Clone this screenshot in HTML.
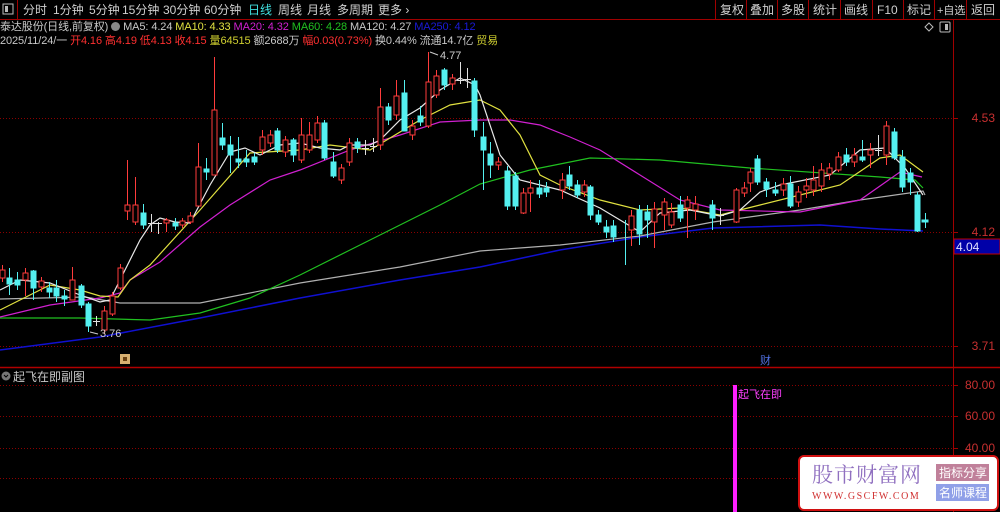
<!DOCTYPE html><html><head><meta charset="utf-8"><style>
body{margin:0;background:#000;width:1000px;height:512px;overflow:hidden;position:relative;font-family:"Liberation Sans","Noto Sans CJK SC",sans-serif;}
.t{position:absolute;white-space:nowrap;font-size:11px;letter-spacing:-0.1px}
</style></head><body>
<svg width="1000" height="512" style="position:absolute;left:0;top:0" font-family="Liberation Sans, Noto Sans CJK SC, sans-serif">
<rect width="1000" height="512" fill="#000"/>
<line x1="0" y1="19.5" x2="1000" y2="19.5" stroke="#a00000"/>
<rect x="3" y="4" width="10" height="10" fill="none" stroke="#bbb"/><rect x="5" y="6" width="3" height="6" fill="#bbb"/>
<line x1="17.5" y1="0" x2="17.5" y2="19" stroke="#a00000"/>
<g fill="#d0d0d0" font-size="12">
<text x="23" y="14">分时</text><text x="53" y="14">1分钟</text><text x="89" y="14">5分钟</text><text x="122" y="14">15分钟</text><text x="163" y="14">30分钟</text><text x="204" y="14">60分钟</text>
<text x="248" y="14" fill="#40e0e0">日线</text><text x="278" y="14">周线</text><text x="307" y="14">月线</text><text x="337" y="14">多周期</text><text x="378" y="14">更多 ›</text>
<text x="720" y="14">复权</text><text x="750" y="14">叠加</text><text x="781" y="14">多股</text><text x="813" y="14">统计</text><text x="844" y="14">画线</text><text x="877" y="14">F10</text><text x="907" y="14">标记</text><text x="937" y="14" font-size="11">+自选</text><text x="971" y="14">返回</text>
</g>
<g stroke="#a00000"><line x1="715.5" y1="0" x2="715.5" y2="19"/><line x1="746.5" y1="0" x2="746.5" y2="19"/><line x1="777.5" y1="0" x2="777.5" y2="19"/><line x1="808.5" y1="0" x2="808.5" y2="19"/><line x1="840.5" y1="0" x2="840.5" y2="19"/><line x1="872.5" y1="0" x2="872.5" y2="19"/><line x1="903.5" y1="0" x2="903.5" y2="19"/><line x1="934.5" y1="0" x2="934.5" y2="19"/><line x1="966.5" y1="0" x2="966.5" y2="19"/></g>
<line x1="953.5" y1="20" x2="953.5" y2="512" stroke="#a00000"/>
<path d="M925 27l4-4 4 4-4 4z" fill="none" stroke="#bbb"/><rect x="940" y="22" width="10" height="10" rx="1" fill="none" stroke="#bbb"/><rect x="945" y="24" width="3" height="6" fill="#bbb"/>
<g stroke="#8a0000" stroke-dasharray="1,2"><line x1="0" y1="118.5" x2="953" y2="118.5"/><line x1="0" y1="232.5" x2="953" y2="232.5"/><line x1="0" y1="346.5" x2="953" y2="346.5"/>
<line x1="0" y1="385.5" x2="953" y2="385.5"/><line x1="0" y1="416.5" x2="953" y2="416.5"/><line x1="0" y1="448.5" x2="953" y2="448.5"/><line x1="0" y1="478.5" x2="953" y2="478.5"/></g>
<g stroke="#a00000"><line x1="953" y1="118.5" x2="958" y2="118.5"/><line x1="953" y1="232.5" x2="958" y2="232.5"/><line x1="953" y1="346.5" x2="958" y2="346.5"/><line x1="953" y1="385.5" x2="958" y2="385.5"/><line x1="953" y1="416.5" x2="958" y2="416.5"/><line x1="953" y1="448.5" x2="958" y2="448.5"/></g>
<g fill="#c83030" font-size="12" text-anchor="end"><text x="995" y="122">4.53</text><text x="995" y="236">4.12</text><text x="995" y="350">3.71</text><text x="995" y="389">80.00</text><text x="995" y="420">60.00</text><text x="995" y="452">40.00</text></g>
<rect x="954" y="239" width="46" height="15" fill="#0000a8" stroke="#c00000"/>
<text x="956" y="251" fill="#e0e0ff" font-size="12">4.04</text>
<line x1="0" y1="367.5" x2="1000" y2="367.5" stroke="#b00000" stroke-width="1.5"/>
<g fill="none" stroke-width="1.2">
<polyline stroke="#1010d0" stroke-width="1.5" points="0,350 100,337 200,318 300,298 400,280 480,267 560,250 640,237 713,228 820,225 880,229 923,231"/>
<polyline stroke="#b0b0b0" points="0,299 85,297 120,303 200,303 300,283 400,267 480,251 560,245 640,236 713,222 800,210 860,200 923,191 925,195"/>
<polyline stroke="#20c020" points="0,318 80,318 150,320 200,313 250,298 300,275 350,250 400,225 440,205 480,184 530,170 590,158 660,160 750,168 880,177 915,180 923,188"/>
<polyline stroke="#d020d0" points="0,317 50,305 100,298 120,293 130,280 160,262 200,227 230,205 270,180 300,170 350,150 400,135 440,122 480,120 510,120 540,125 570,137 600,150 640,175 680,200 720,210 800,212 860,200 900,172 922,177"/>
<polyline stroke="#e0e040" points="0,310 50,285 80,290 100,296 118,297 130,280 150,265 200,210 250,153 300,150 330,145 370,150 420,120 450,105 480,100 500,110 520,135 540,175 560,185 600,200 640,210 680,208 720,215 760,205 800,195 840,185 880,158 900,155 923,172"/>
<polyline stroke="#e8e8e8" points="0,290 20,280 50,283 80,295 100,302 110,300 125,270 140,240 150,225 160,218 175,222 190,223 210,185 230,152 245,148 260,155 280,145 300,143 320,148 340,150 350,145 370,145 380,140 400,120 420,108 440,90 460,78 475,85 480,95 500,155 520,180 560,190 600,208 640,232 660,213 690,210 720,216 740,210 760,192 780,185 830,175 860,150 885,148 905,168 923,195"/>
</g>
<g stroke="#ff3c3c" fill="#000" stroke-width="1">
<line x1="2.5" y1="265" x2="2.5" y2="282"/><rect x="0" y="270" width="5" height="8"/>
<line x1="25.5" y1="268" x2="25.5" y2="296"/><rect x="23" y="273" width="5" height="7"/>
<line x1="41.5" y1="277" x2="41.5" y2="292"/><rect x="39" y="281" width="5" height="6"/>
<line x1="72.5" y1="267" x2="72.5" y2="300"/><rect x="70" y="280" width="5" height="20"/>
<line x1="104.5" y1="306" x2="104.5" y2="334"/><rect x="102" y="311" width="5" height="19"/>
<line x1="112.5" y1="292" x2="112.5" y2="316"/><rect x="110" y="296" width="5" height="18"/>
<line x1="120.5" y1="264" x2="120.5" y2="290"/><rect x="118" y="268" width="5" height="20"/>
<line x1="127.5" y1="160" x2="127.5" y2="220"/><rect x="125" y="205" width="5" height="6"/>
<line x1="135.5" y1="177" x2="135.5" y2="225"/><rect x="133" y="205" width="5" height="17"/>
<line x1="166.5" y1="218" x2="166.5" y2="232"/><rect x="164" y="220" width="5" height="3"/>
<line x1="182.5" y1="218" x2="182.5" y2="228"/><rect x="180" y="221" width="5" height="4"/>
<line x1="190.5" y1="212" x2="190.5" y2="224"/><rect x="188" y="216" width="5" height="6"/>
<line x1="198.5" y1="143" x2="198.5" y2="206"/><rect x="196" y="167" width="5" height="39"/>
<line x1="214.5" y1="57" x2="214.5" y2="175"/><rect x="212" y="110" width="5" height="65"/>
<line x1="262.5" y1="130" x2="262.5" y2="155"/><rect x="260" y="137" width="5" height="13"/>
<line x1="270.5" y1="130" x2="270.5" y2="147"/><rect x="268" y="135" width="5" height="8"/>
<line x1="285.5" y1="136" x2="285.5" y2="157"/><rect x="283" y="140" width="5" height="12"/>
<line x1="301.5" y1="118" x2="301.5" y2="163"/><rect x="299" y="135" width="5" height="25"/>
<line x1="309.5" y1="122" x2="309.5" y2="153"/><rect x="307" y="135" width="5" height="15"/>
<line x1="317.5" y1="116" x2="317.5" y2="143"/><rect x="315" y="123" width="5" height="17"/>
<line x1="341.5" y1="164" x2="341.5" y2="184"/><rect x="339" y="168" width="5" height="12"/>
<line x1="349.5" y1="138" x2="349.5" y2="166"/><rect x="347" y="143" width="5" height="19"/>
<line x1="380.5" y1="88" x2="380.5" y2="150"/><rect x="378" y="107" width="5" height="38"/>
<line x1="396.5" y1="80" x2="396.5" y2="120"/><rect x="394" y="96" width="5" height="19"/>
<line x1="412.5" y1="120" x2="412.5" y2="140"/><rect x="410" y="126" width="5" height="9"/>
<line x1="428.5" y1="52" x2="428.5" y2="128"/><rect x="426" y="82" width="5" height="44"/>
<line x1="436.5" y1="70" x2="436.5" y2="98"/><rect x="434" y="76" width="5" height="19"/>
<line x1="452.5" y1="74" x2="452.5" y2="90"/><rect x="450" y="78" width="5" height="6"/>
<line x1="498.5" y1="157" x2="498.5" y2="170"/><rect x="496" y="162" width="5" height="3"/>
<line x1="523.5" y1="188" x2="523.5" y2="214"/><rect x="521" y="193" width="5" height="20"/>
<line x1="530.5" y1="180" x2="530.5" y2="212"/><rect x="528" y="188" width="5" height="5"/>
<line x1="562.5" y1="173" x2="562.5" y2="199"/><rect x="560" y="180" width="5" height="10"/>
<line x1="584.5" y1="180" x2="584.5" y2="197"/><rect x="582" y="185" width="5" height="7"/>
<line x1="631.5" y1="210" x2="631.5" y2="246"/><rect x="629" y="216" width="5" height="14"/>
<line x1="654.5" y1="202" x2="654.5" y2="248"/><rect x="652" y="209" width="5" height="13"/>
<line x1="664.5" y1="198" x2="664.5" y2="230"/><rect x="662" y="202" width="5" height="13"/>
<line x1="671.5" y1="203" x2="671.5" y2="228"/><rect x="669" y="212" width="5" height="13"/>
<line x1="687.5" y1="196" x2="687.5" y2="238"/><rect x="685" y="200" width="5" height="8"/>
<line x1="695.5" y1="196" x2="695.5" y2="220"/><rect x="693" y="204" width="5" height="6"/>
<line x1="736.5" y1="188" x2="736.5" y2="223"/><rect x="734" y="190" width="5" height="32"/>
<line x1="744.5" y1="182" x2="744.5" y2="197"/><rect x="742" y="188" width="5" height="5"/>
<line x1="750.5" y1="168" x2="750.5" y2="192"/><rect x="748" y="172" width="5" height="11"/>
<line x1="783.5" y1="178" x2="783.5" y2="196"/><rect x="781" y="184" width="5" height="6"/>
<line x1="798.5" y1="186" x2="798.5" y2="207"/><rect x="796" y="192" width="5" height="10"/>
<line x1="806.5" y1="178" x2="806.5" y2="198"/><rect x="804" y="186" width="5" height="4"/>
<line x1="813.5" y1="166" x2="813.5" y2="196"/><rect x="811" y="180" width="5" height="10"/>
<line x1="821.5" y1="163" x2="821.5" y2="192"/><rect x="819" y="170" width="5" height="16"/>
<line x1="829.5" y1="163" x2="829.5" y2="180"/><rect x="827" y="168" width="5" height="6"/>
<line x1="838.5" y1="152" x2="838.5" y2="172"/><rect x="836" y="157" width="5" height="13"/>
<line x1="854.5" y1="148" x2="854.5" y2="167"/><rect x="852" y="155" width="5" height="7"/>
<line x1="870.5" y1="143" x2="870.5" y2="168"/><rect x="868" y="150" width="5" height="5"/>
<line x1="886.5" y1="121" x2="886.5" y2="165"/><rect x="884" y="126" width="5" height="29"/>
</g>
<g stroke="#54f0f0" fill="#54f0f0">
<line x1="9.5" y1="268" x2="9.5" y2="295"/><rect x="7" y="278" width="5" height="6"/>
<line x1="17.5" y1="272" x2="17.5" y2="290"/><rect x="15" y="280" width="5" height="5"/>
<line x1="33.5" y1="270" x2="33.5" y2="300"/><rect x="31" y="271" width="5" height="17"/>
<line x1="49.5" y1="282" x2="49.5" y2="298"/><rect x="47" y="288" width="5" height="4"/>
<line x1="56.5" y1="280" x2="56.5" y2="302"/><rect x="54" y="288" width="5" height="8"/>
<line x1="64.5" y1="290" x2="64.5" y2="306"/><rect x="62" y="296" width="5" height="3"/>
<line x1="81.5" y1="284" x2="81.5" y2="308"/><rect x="79" y="286" width="5" height="19"/>
<line x1="88.5" y1="302" x2="88.5" y2="332"/><rect x="86" y="304" width="5" height="22"/>
<line x1="143.5" y1="204" x2="143.5" y2="229"/><rect x="141" y="213" width="5" height="12"/>
<line x1="175.5" y1="218" x2="175.5" y2="230"/><rect x="173" y="223" width="5" height="3"/>
<line x1="206.5" y1="158" x2="206.5" y2="180"/><rect x="204" y="169" width="5" height="3"/>
<line x1="222.5" y1="123" x2="222.5" y2="150"/><rect x="220" y="138" width="5" height="7"/>
<line x1="230.5" y1="136" x2="230.5" y2="173"/><rect x="228" y="145" width="5" height="10"/>
<line x1="238.5" y1="137" x2="238.5" y2="168"/><rect x="236" y="159" width="5" height="3"/>
<line x1="246.5" y1="150" x2="246.5" y2="167"/><rect x="244" y="159" width="5" height="3"/>
<line x1="254.5" y1="153" x2="254.5" y2="165"/><rect x="252" y="157" width="5" height="5"/>
<line x1="277.5" y1="128" x2="277.5" y2="153"/><rect x="275" y="131" width="5" height="19"/>
<line x1="293.5" y1="138" x2="293.5" y2="162"/><rect x="291" y="140" width="5" height="15"/>
<line x1="324.5" y1="120" x2="324.5" y2="160"/><rect x="322" y="123" width="5" height="35"/>
<line x1="333.5" y1="152" x2="333.5" y2="178"/><rect x="331" y="162" width="5" height="14"/>
<line x1="357.5" y1="138" x2="357.5" y2="153"/><rect x="355" y="142" width="5" height="6"/>
<line x1="388.5" y1="103" x2="388.5" y2="125"/><rect x="386" y="107" width="5" height="13"/>
<line x1="404.5" y1="80" x2="404.5" y2="131"/><rect x="402" y="93" width="5" height="38"/>
<line x1="420.5" y1="106" x2="420.5" y2="126"/><rect x="418" y="116" width="5" height="6"/>
<line x1="444.5" y1="68" x2="444.5" y2="90"/><rect x="442" y="70" width="5" height="15"/>
<line x1="474.5" y1="78" x2="474.5" y2="137"/><rect x="472" y="81" width="5" height="49"/>
<line x1="483.5" y1="122" x2="483.5" y2="190"/><rect x="481" y="137" width="5" height="13"/>
<line x1="490.5" y1="142" x2="490.5" y2="178"/><rect x="488" y="154" width="5" height="11"/>
<line x1="507.5" y1="166" x2="507.5" y2="210"/><rect x="505" y="171" width="5" height="35"/>
<line x1="515.5" y1="172" x2="515.5" y2="210"/><rect x="513" y="176" width="5" height="30"/>
<line x1="539.5" y1="180" x2="539.5" y2="198"/><rect x="537" y="188" width="5" height="6"/>
<line x1="546.5" y1="182" x2="546.5" y2="197"/><rect x="544" y="188" width="5" height="4"/>
<line x1="569.5" y1="166" x2="569.5" y2="190"/><rect x="567" y="175" width="5" height="11"/>
<line x1="577.5" y1="180" x2="577.5" y2="198"/><rect x="575" y="185" width="5" height="10"/>
<line x1="590.5" y1="185" x2="590.5" y2="220"/><rect x="588" y="187" width="5" height="28"/>
<line x1="598.5" y1="210" x2="598.5" y2="225"/><rect x="596" y="215" width="5" height="7"/>
<line x1="606.5" y1="220" x2="606.5" y2="238"/><rect x="604" y="227" width="5" height="5"/>
<line x1="613.5" y1="220" x2="613.5" y2="242"/><rect x="611" y="226" width="5" height="11"/>
<line x1="625.5" y1="220" x2="625.5" y2="265"/>
<line x1="639.5" y1="205" x2="639.5" y2="245"/><rect x="637" y="210" width="5" height="24"/>
<line x1="647.5" y1="205" x2="647.5" y2="238"/><rect x="645" y="212" width="5" height="8"/>
<line x1="680.5" y1="196" x2="680.5" y2="222"/><rect x="678" y="205" width="5" height="13"/>
<line x1="712.5" y1="200" x2="712.5" y2="230"/><rect x="710" y="205" width="5" height="13"/>
<line x1="757.5" y1="155" x2="757.5" y2="185"/><rect x="755" y="159" width="5" height="23"/>
<line x1="766.5" y1="178" x2="766.5" y2="197"/><rect x="764" y="182" width="5" height="7"/>
<line x1="775.5" y1="182" x2="775.5" y2="196"/><rect x="773" y="190" width="5" height="3"/>
<line x1="790.5" y1="176" x2="790.5" y2="208"/><rect x="788" y="184" width="5" height="22"/>
<line x1="846.5" y1="148" x2="846.5" y2="166"/><rect x="844" y="155" width="5" height="7"/>
<line x1="862.5" y1="140" x2="862.5" y2="162"/><rect x="860" y="157" width="5" height="3"/>
<line x1="894.5" y1="128" x2="894.5" y2="160"/><rect x="892" y="132" width="5" height="26"/>
<line x1="902.5" y1="150" x2="902.5" y2="192"/><rect x="900" y="157" width="5" height="30"/>
<line x1="910.5" y1="168" x2="910.5" y2="195"/><rect x="908" y="173" width="5" height="9"/>
<line x1="917.5" y1="192" x2="917.5" y2="232"/><rect x="915" y="195" width="5" height="36"/>
<line x1="925.5" y1="213" x2="925.5" y2="228"/><rect x="922" y="220" width="6" height="2"/>
</g>
<g stroke="#e0e0e0"><line x1="93" y1="321.5" x2="100" y2="321.5"/><line x1="96.5" y1="316" x2="96.5" y2="326"/><line x1="148" y1="223.5" x2="155" y2="223.5"/><line x1="151.5" y1="214" x2="151.5" y2="232"/><line x1="155" y1="223.5" x2="162" y2="223.5"/><line x1="158.5" y1="222" x2="158.5" y2="234"/><line x1="362" y1="148.5" x2="369" y2="148.5"/><line x1="365.5" y1="140" x2="365.5" y2="155"/><line x1="370" y1="146.5" x2="377" y2="146.5"/><line x1="373.5" y1="138" x2="373.5" y2="152"/><line x1="457" y1="80.5" x2="464" y2="80.5"/><line x1="460.5" y1="62" x2="460.5" y2="84"/><line x1="464" y1="79.5" x2="471" y2="79.5"/><line x1="467.5" y1="68" x2="467.5" y2="88"/><line x1="717" y1="215.5" x2="724" y2="215.5"/><line x1="720.5" y1="208" x2="720.5" y2="225"/><line x1="875" y1="150.5" x2="882" y2="150.5"/><line x1="878.5" y1="135" x2="878.5" y2="156"/></g>
<path d="M430 52l8 3" stroke="#ccc" fill="none"/><text x="440" y="59" fill="#ccc" font-size="11">4.77</text>
<path d="M90 332l8 2" stroke="#ccc" fill="none"/><text x="100" y="337" fill="#ccc" font-size="11">3.76</text>
<rect x="120" y="354" width="10" height="10" fill="#d8b070"/><rect x="123" y="357" width="4" height="4" fill="#6a4010"/>
<text x="760" y="364" fill="#5070e0" font-size="11">财</text>
<circle cx="6" cy="376" r="4.5" fill="#777"/><path d="M4 375l2 2 2-2" stroke="#000" fill="none"/>
<text x="13" y="381" fill="#c8c8c8" font-size="12">起飞在即副图</text>
<rect x="733" y="385" width="4" height="127" fill="#ff20ff"/>
<text x="738" y="398" fill="#ff40ff" font-size="11">起飞在即</text>
<rect x="799" y="456" width="199" height="54" rx="5" fill="#fff" stroke="#d01010" stroke-width="2"/>
<text x="812" y="482" fill="#9070c0" font-size="21" font-family="Noto Serif CJK SC, serif" letter-spacing="1">股市财富网</text>
<text x="812" y="499" fill="#d03030" font-size="10" font-family="Liberation Serif, serif" letter-spacing="1.5">WWW.GSCFW.COM</text>
<rect x="936" y="464" width="53" height="17" fill="#c0809a"/><text x="939" y="477" fill="#fff" font-size="12">指标分享</text>
<rect x="936" y="484" width="53" height="17" fill="#90a0e8"/><text x="939" y="497" fill="#fff" font-size="12">名师课程</text>
</svg>
<div class="t" style="left:0;top:18px;color:#c8c8c8">泰达股份(日线,前复权) <span style="display:inline-block;width:9px;height:9px;border-radius:5px;background:#888;vertical-align:-1px"></span> MA5: 4.24 <span style="color:#e0e040">MA10: 4.33</span> <span style="color:#d020d0">MA20: 4.32</span> <span style="color:#20c020">MA60: 4.28</span> MA120: 4.27 <span style="color:#1a1ad8">MA250: 4.12</span></div>
<div class="t" style="left:0;top:32px;color:#c8c8c8">2025/11/24/一 <span style="color:#ff3030">开4.16 高4.19 低4.13 收4.15</span> <span style="color:#d0d030">量64515</span> 额2688万 <span style="color:#ff3030">幅0.03(0.73%)</span> 换0.44% 流通14.7亿 <span style="color:#d0d030">贸易</span></div>
</body></html>
